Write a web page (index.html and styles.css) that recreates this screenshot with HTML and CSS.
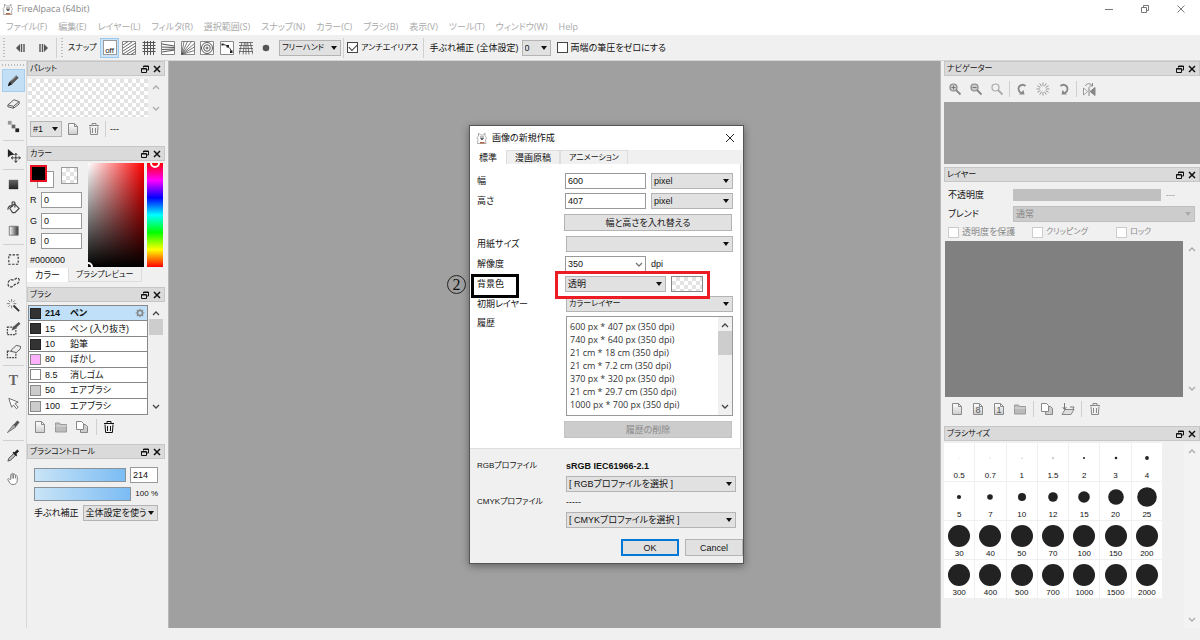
FILE: index.html
```html
<!DOCTYPE html>
<html lang="ja">
<head>
    <meta charset="UTF-8">
    <meta name="viewport" content="width=device-width, initial-scale=1.0">
    <title>FireAlpaca (64bit)</title>
    <link rel="stylesheet" href="styles.css">
</head>
<body>

    <!-- Shared icons -->
    <svg class="sprite" width="0" height="0" aria-hidden="true">
        <defs>
            <linearGradient id="darkFade" x1="0" y1="0" x2="0" y2="1"><stop offset="0" stop-color="#666"/><stop offset="1" stop-color="#222"/></linearGradient>
            <linearGradient id="sideFade"><stop offset="0" stop-color="#fff"/><stop offset="1" stop-color="#333"/></linearGradient>
            <linearGradient id="sheet" x1="0" y1="0" x2="0" y2="1"><stop offset="0" stop-color="#fff"/><stop offset="1" stop-color="#ccc"/></linearGradient>
            <symbol id="alpaca" viewBox="0 0 12 12">
                <path d="M2.500 1v3L1 5.500 2 8l-.5 3.500h8.500L9.500 8l1-2.500L9 4V1L7.500 3h-3z" fill="#fff" stroke="#999" stroke-width=".8"/>
                <path d="M4 5h4M4.500 6.500h3L6 8z" fill="#555" stroke="#555" stroke-width=".8"/>
                <path d="M4 10h4.500v1.500H4z" fill="#b56a4a"/>
            </symbol>
            <symbol id="float" viewBox="0 0 8 8">
                <path d="M2.500 2.500V1h5v4H6M2.500 1.500h5M.5 3.500h5v4h-5zM.5 4h5" fill="none" stroke="#111"/>
            </symbol>
            <symbol id="close" viewBox="0 0 8 8"><path d="M1 1l6 6M7 1L1 7" stroke="#111" stroke-width="1.500"/></symbol>
            <symbol id="up" viewBox="0 0 8 8"><path d="M1 6l3-3 3 3" fill="none" stroke="currentColor" stroke-width="1.300"/></symbol>
            <symbol id="down" viewBox="0 0 8 8"><path d="M1 2l3 3 3-3" fill="none" stroke="currentColor" stroke-width="1.300"/></symbol>
            <symbol id="page" viewBox="0 0 14 14">
                <path d="M2.500 1.500h6l3 3v8h-9z" fill="url(#sheet)" stroke="#8a8a8a"/><path d="M8.500 1.500v3h3" fill="none" stroke="#8a8a8a"/>
            </symbol>
            <symbol id="folder" viewBox="0 0 14 14">
                <path d="M1.500 3h4l1 1.500h6V12h-11z" fill="#bbb" stroke="#999"/><path d="M1.500 6h11" stroke="#ddd"/>
            </symbol>
            <symbol id="copy" viewBox="0 0 14 14">
                <path d="M5.500 4.500h5l2 2v6h-7z" fill="#ccc" stroke="#888"/><path d="M1.500 1.500h5l2 2v6h-7z" fill="#fff" stroke="#888"/>
            </symbol>
            <symbol id="trash" viewBox="0 0 14 14">
                <path d="M3 4.500l.6 8h6.800l.6-8M2 3.500h10M5 3V1.500h4V3M5.500 6v5M8.500 6v5" fill="none" stroke="currentColor"/>
            </symbol>
            <symbol id="merge" viewBox="0 0 14 14">
                <path d="M4 7.500h9l-3 5H1z" fill="#ddd" stroke="#888"/><path d="M9 5h4l-1 2M3.500 1v6M1.500 5l2 2.500 2-2.500" fill="none" stroke="#777"/>
            </symbol>
            <symbol id="loupe" viewBox="0 0 14 14">
                <circle cx="5.500" cy="5.500" r="3.500" fill="none" stroke="currentColor" stroke-width="1.200"/><path d="M8 8l4.500 4.500" stroke="currentColor" stroke-width="1.800"/>
            </symbol>
            <symbol id="turn" viewBox="0 0 14 14">
                <path d="M10.500 4C8 1.500 3.500 3 3.500 7c0 2 1 3 2.500 4" fill="none" stroke="#888" stroke-width="1.800"/><path d="M4 12.500h5.500L8.500 8z" fill="#888"/>
            </symbol>
            <symbol id="gear" viewBox="0 0 12 12">
                <circle cx="6" cy="6" r="3" fill="none" stroke="#888" stroke-width="1.800"/>
                <path d="M6 .8v2M6 9.200v2M.8 6h2M9.200 6h2M2.300 2.300l1.400 1.400M8.300 8.300l1.400 1.400M9.700 2.300L8.300 3.700M3.700 8.300L2.300 9.700" stroke="#888" stroke-width="1.400"/>
            </symbol>
        </defs>
    </svg>

    <header class="titlebar">
        <svg class="app-icon"><use href="#alpaca"/></svg>
        <h1>FireAlpaca (64bit)</h1>
        <div class="window-buttons">
            <button aria-label="最小化"><svg viewBox="0 0 10 10"><path d="M1 5.500h8" stroke="#777"/></svg></button>
            <button aria-label="元に戻す"><svg viewBox="0 0 10 10"><path d="M1.500 3.500h5v5h-5zM3.500 3V1.500h5v5H7" fill="none" stroke="#777"/></svg></button>
            <button aria-label="閉じる"><svg viewBox="0 0 10 10"><path d="M1.500 1.500l7 7M8.500 1.500l-7 7" stroke="#777"/></svg></button>
        </div>
    </header>

    <nav class="menubar">
        <button>ファイル(F)</button>
        <button>編集(E)</button>
        <button>レイヤー(L)</button>
        <button>フィルタ(R)</button>
        <button>選択範囲(S)</button>
        <button>スナップ(N)</button>
        <button>カラー(C)</button>
        <button>ブラシ(B)</button>
        <button>表示(V)</button>
        <button>ツール(T)</button>
        <button>ウィンドウ(W)</button>
        <button>Help</button>
    </nav>

    <div class="toolbar">
        <span class="grip"></span>
        <button class="step" aria-label="前へ"><svg viewBox="0 0 10 10"><path d="M5 1v8L1 5z" fill="#555"/><path d="M6.500 1v8M9 1v8" stroke="#555" stroke-width="1.400"/></svg></button>
        <button class="step" aria-label="次へ"><svg viewBox="0 0 10 10"><path d="M5 1v8l4-4z" fill="#555"/><path d="M1 1v8M3.500 1v8" stroke="#555" stroke-width="1.400"/></svg></button>
        <span class="divider"></span>
        <span class="grip"></span>
        <span class="snap-label kana">スナップ</span>
        <div class="snaps">
            <button class="snap active" aria-label="スナップオフ"><span class="snap-off">off</span></button>
            <button class="snap" aria-label="平行"><svg viewBox="0 0 14 14"><path d="M.5.5h13v13H.5z" fill="#fff" stroke="#888"/><path d="M1 4l5-3.500M1 7l9-6M1 10l12.500-8M1 13l12.500-8M5 13l8.500-5M9 13.500l4.500-3" stroke="#555" stroke-width=".9"/></svg></button>
            <button class="snap" aria-label="十字"><svg viewBox="0 0 14 14"><path d="M.5 1.500h13M.5 4.500h13M.5 7.500h13M.5 10.500h13M2.500 0v14M5.500 0v14M8.500 0v14M11.500 0v14" stroke="#555"/></svg></button>
            <button class="snap" aria-label="消失点"><svg viewBox="0 0 14 14"><path d="M.5.5h13v13H.5z" fill="#fff" stroke="#888"/><path d="M1 3l12.500 2M1 6l12.500.5M1 8.500l12.500-.5M1 11l12.500-2" stroke="#555" fill="none"/></svg></button>
            <button class="snap" aria-label="放射"><svg viewBox="0 0 14 14"><path d="M.5.5h13v13H.5z" fill="#fff" stroke="#888"/><path d="M.5 13.500L3 .5M.5 13.500l6-13M.5 13.500l10-13M.5 13.500l13-11M.5 13.500l13-7.500M.5 13.500l13-4" stroke="#555" stroke-width=".8"/></svg></button>
            <button class="snap" aria-label="同心円"><svg viewBox="0 0 14 14"><path d="M.5.5h13v13H.5z" fill="#fff" stroke="#888"/><g fill="none" stroke="#555"><circle cx="7" cy="7" r="5.500"/><circle cx="7" cy="7" r="3.300"/><circle cx="7" cy="7" r="1"/></g></svg></button>
            <button class="snap" aria-label="曲線"><svg viewBox="0 0 14 14"><path d="M.5.5h13v13H.5z" fill="#fff" stroke="#888"/><path d="M2 3.500c5 0 8 3 9.500 7" fill="none" stroke="#333"/><path d="M1.500 2.500h2v2h-2zM6.500 4h2.500v2.500H6.500zM10 9.500h2.500V12H10z" fill="#222"/></svg></button>
            <button class="snap" aria-label="パース"><svg viewBox="0 0 14 14"><path d="M0 1.500h14M0 4.500h14M0 7.500h14M0 10.500h14M3 1L0 13.500M5.500 1L4 13.500M8.500 1l1.500 12.500M11 1l3 12.500M7 1v12.500" stroke="#555" stroke-width=".8"/></svg></button>
            <button class="snap" aria-label="スナップ設定"><svg viewBox="0 0 14 14"><circle cx="7" cy="7" r="3.300" fill="#555"/></svg></button>
        </div>
        <span class="select freehand kana"><select aria-label="描画方法"><option>フリーハンド</option></select></span>
        <span class="divider"></span>
        <label class="check kana"><input type="checkbox" checked>アンチエイリアス</label>
        <span class="divider wide"></span>
        <label for="stabilizer">手ぶれ補正 (全体設定)</label>
        <span class="select level"><select id="stabilizer"><option>0</option></select></span>
        <label class="check"><input type="checkbox">両端の筆圧をゼロにする</label>
    </div>

    <div class="workspace">

        <div class="tools">
            <span class="tool-grip"></span>
            <button class="tool active" aria-label="ブラシ"><svg viewBox="0 0 16 16"><path d="M2 14l1.500-4.500L11 2.500l2.500 2.500-7.500 7.500z" fill="#555"/><path d="M2 14l1.500-4.500L6 12z" fill="#111"/><path d="M6 8l5.500-5" stroke="#aaa"/></svg></button>
            <button class="tool" aria-label="消しゴム"><svg viewBox="0 0 16 16"><path d="M2 9.500L8.500 4 14 6v2.500L8 13l-6-1.500z" fill="#eee" stroke="#555"/><path d="M2 9.500l6 1.500v2M8 11l6-5" fill="none" stroke="#555"/></svg></button>
            <button class="tool" aria-label="ドット"><svg viewBox="0 0 16 16"><path d="M2 2h4v4H2z" fill="#999"/><path d="M6 6h4v4H6z" fill="#666"/><path d="M10 10h4v4h-4z" fill="#222"/></svg></button>
            <hr>
            <button class="tool" aria-label="移動"><svg viewBox="0 0 16 16"><path d="M2 1v9l2.500-2L9 7z" fill="#222"/><path d="M10.500 6v9M6 10.500h9M9 7.500l1.500-2L12 7.500M9 13.500l1.500 2 1.500-2M7.500 9l-2 1.500 2 1.500M13.500 9l2 1.500-2 1.500" fill="none" stroke="#333"/></svg></button>
            <hr>
            <button class="tool" aria-label="塗りつぶし"><svg viewBox="0 0 16 16"><path d="M3 3h10v10H3z" fill="url(#darkFade)"/></svg></button>
            <button class="tool" aria-label="バケツ"><svg viewBox="0 0 16 16"><path d="M4 9l5-5 5 5-4.500 4.500H7z" fill="#eee" stroke="#444" stroke-width="1.200"/><path d="M2 10.500c0-3 1.500-4.500 4.500-4.500M6.500 7.500V3c0-1.500 3-1.500 3 0v5" fill="none" stroke="#444" stroke-width="1.200"/></svg></button>
            <button class="tool" aria-label="グラデーション"><svg viewBox="0 0 16 16"><path d="M3.500 3.500h9.500v9.500H3.500z" fill="url(#sideFade)" stroke="#777"/></svg></button>
            <hr>
            <button class="tool" aria-label="選択"><svg viewBox="0 0 16 16"><path d="M3 3h10v10H3z" fill="none" stroke="#333" stroke-width="1.200" stroke-dasharray="2.500 1.500"/></svg></button>
            <button class="tool" aria-label="投げなわ"><svg viewBox="0 0 16 16"><path d="M5 5c2 0 3 1 4 0s3-2.500 4.500-1 0 4-1 5-3 .5-4 2-4 2.500-5.500 1S2 6 5 5z" fill="none" stroke="#444" stroke-width="1.300" stroke-dasharray="3 1.200"/></svg></button>
            <button class="tool" aria-label="自動選択"><svg viewBox="0 0 16 16"><path d="M8 8l6 6" stroke="#333" stroke-width="2"/><path d="M6 1v3M6 8v3M1 6h3M8 6h3M2.500 2.500l2 2M9.500 2.500l-2 2M2.500 9.500l2-2" stroke="#777"/></svg></button>
            <button class="tool" aria-label="選択ペン"><svg viewBox="0 0 16 16"><path d="M1.500 6.500h9v8h-9z" fill="none" stroke="#444" stroke-width="1.300" stroke-dasharray="2 1"/><path d="M6 10l1-3 6.500-6L15.500 3 9 9z" fill="#555"/></svg></button>
            <button class="tool" aria-label="選択消し"><svg viewBox="0 0 16 16"><path d="M1.500 7.500h9v7h-9z" fill="none" stroke="#444" stroke-width="1.300" stroke-dasharray="2 1"/><path d="M6 6l5-4.500 4.500 1V5L11 9 6 8z" fill="#eee" stroke="#555"/></svg></button>
            <hr>
            <button class="tool letter" aria-label="テキスト">T</button>
            <button class="tool" aria-label="操作"><svg viewBox="0 0 16 16"><path d="M3 2.500l10 4-3.500 1.500 3.500 4-2 1.500-3-4L6 12z" fill="#fff" stroke="#666"/></svg></button>
            <button class="tool" aria-label="分割"><svg viewBox="0 0 16 16"><path d="M1.500 14.500L8 6l2.500 2.500z" fill="#aaa" stroke="#777"/><path d="M8 6l4-4.500 2.500 2L10.500 8.500z" fill="#555"/></svg></button>
            <hr>
            <button class="tool" aria-label="スポイト"><svg viewBox="0 0 16 16"><path d="M2 14l1-3 5-5 2 2-5 5z" fill="#bbb" stroke="#555"/><path d="M7 5l4 4 1-1.500-1-1 3-3-2-2-3 3-1-.5z" fill="#222"/></svg></button>
            <button class="tool" aria-label="手のひら"><svg viewBox="0 0 16 16"><path d="M5 9V4.500c0-1.500 1.500-1.500 1.500 0v-1c0-1.500 1.500-1.500 1.500 0v1c0-1.500 2-1.500 2 0v1c0-1.500 2-1 2 .5V10c0 3-2 4.500-4.500 4.500S4 13 2 9.500C1.500 8 3 7.500 4 9zM6.500 4.500V8M8 4.500V8M10 5v3" fill="#fff" stroke="#777"/></svg></button>
        </div>

        <aside class="dock left-dock">
            <section class="panel palette">
                <div class="panel-head"><h2>パレット</h2><button aria-label="切り離す"><svg><use href="#float"/></svg></button><button aria-label="閉じる"><svg><use href="#close"/></svg></button></div>
                <div class="palette-body">
                    <div class="swatches checker"></div>
                    <div class="scroll faint"><svg><use href="#up"/></svg><svg><use href="#down"/></svg></div>
                </div>
                <div class="palette-actions">
                    <span class="select"><select aria-label="パレット番号"><option>#1</option></select></span>
                    <button aria-label="追加"><svg><use href="#page"/></svg></button>
                    <button aria-label="削除" class="muted"><svg><use href="#trash"/></svg></button>
                    <span class="divider"></span>
                    <span>---</span>
                </div>
            </section>

            <section class="panel color">
                <div class="panel-head"><h2>カラー</h2><button aria-label="切り離す"><svg><use href="#float"/></svg></button><button aria-label="閉じる"><svg><use href="#close"/></svg></button></div>
                <div class="color-body">
                    <div class="color-values">
                        <div class="color-chips">
                            <span class="chip-back"></span>
                            <span class="chip-front"></span>
                            <span class="chip-clear checker"></span>
                        </div>
                        <label>R<input type="text" value="0"></label>
                        <label>G<input type="text" value="0"></label>
                        <label>B<input type="text" value="0"></label>
                        <span>#000000</span>
                    </div>
                    <div class="sv-box"><span class="ring"></span></div>
                    <div class="hue-bar"><span class="ring"></span></div>
                </div>
                <div class="tabs">
                    <button class="tab active">カラー</button>
                    <button class="tab kana">ブラシプレビュー</button>
                </div>
            </section>

            <section class="panel brush">
                <div class="panel-head"><h2>ブラシ</h2><button aria-label="切り離す"><svg><use href="#float"/></svg></button><button aria-label="閉じる"><svg><use href="#close"/></svg></button></div>
                <div class="brush-body">
                    <ul class="brush-list">
                        <li class="selected"><i class="tip dark"></i><span>214</span>ペン<svg><use href="#gear"/></svg></li>
                        <li><i class="tip dark"></i><span>15</span>ペン (入り抜き)</li>
                        <li><i class="tip dark"></i><span>10</span>鉛筆</li>
                        <li><i class="tip pink"></i><span>80</span>ぼかし</li>
                        <li><i class="tip"></i><span>8.5</span>消しゴム</li>
                        <li><i class="tip gray"></i><span>50</span>エアブラシ</li>
                        <li><i class="tip gray"></i><span>100</span>エアブラシ</li>
                    </ul>
                    <div class="scroll"><svg><use href="#up"/></svg><span class="thumb"></span><svg><use href="#down"/></svg></div>
                </div>
                <div class="actions">
                    <button aria-label="追加"><svg><use href="#page"/></svg></button>
                    <button aria-label="フォルダ"><svg><use href="#folder"/></svg></button>
                    <button aria-label="複製"><svg><use href="#copy"/></svg></button>
                    <span class="divider"></span>
                    <button aria-label="削除"><svg><use href="#trash"/></svg></button>
                </div>
            </section>

            <section class="panel control">
                <div class="panel-head"><h2>ブラシコントロール</h2><button aria-label="切り離す"><svg><use href="#float"/></svg></button><button aria-label="閉じる"><svg><use href="#close"/></svg></button></div>
                <div class="control-body">
                    <div class="control-row"><input type="range" aria-label="ブラシ幅" value="100"><input type="text" aria-label="幅の値" value="214"></div>
                    <div class="control-row"><input type="range" aria-label="不透明度" value="100"><span class="kana">100 %</span></div>
                    <div class="control-row"><label for="brushStab">手ぶれ補正</label><span class="select"><select id="brushStab"><option>全体設定を使う</option></select></span></div>
                </div>
            </section>
        </aside>

        <main class="canvas">
            <div class="dialog" role="dialog" aria-labelledby="dialogTitle">
                <div class="dialog-title">
                    <svg class="app-icon"><use href="#alpaca"/></svg>
                    <h2 id="dialogTitle">画像の新規作成</h2>
                    <button aria-label="閉じる"><svg viewBox="0 0 10 10"><path d="M1 1l8 8M9 1L1 9" stroke="#222"/></svg></button>
                </div>
                <div class="tabs">
                    <button class="tab active">標準</button>
                    <button class="tab">漫画原稿</button>
                    <button class="tab kana">アニメーション</button>
                </div>
                <form class="sheet">
                    <div class="row"><label for="w">幅</label><div class="fields"><input id="w" type="text" value="600"><span class="select"><select aria-label="幅の単位"><option>pixel</option></select></span></div></div>
                    <div class="row"><label for="h">高さ</label><div class="fields"><input id="h" type="text" value="407"><span class="select"><select aria-label="高さの単位"><option>pixel</option></select></span></div></div>
                    <div class="row"><span></span><button type="button" class="btn">幅と高さを入れ替える</button></div>
                    <div class="row"><label for="paper">用紙サイズ</label><span class="select"><select id="paper"><option></option></select></span></div>
                    <div class="row"><label for="dpi">解像度</label><div class="fields"><span class="combo"><input id="dpi" type="text" value="350"><svg><use href="#down"/></svg></span>dpi</div></div>
                    <div class="row"><label for="bg">背景色</label><div class="fields"><span class="select bg"><select id="bg"><option>透明</option></select></span><span class="bg-swatch checker"></span></div></div>
                    <div class="row"><label for="first">初期レイヤー</label><span class="select kana"><select id="first"><option>カラーレイヤー</option></select></span></div>
                    <div class="row history"><span>履歴</span>
                        <div class="listbox">
                            <ul>
                                <li>600 px * 407 px (350 dpi)</li>
                                <li>740 px * 640 px (350 dpi)</li>
                                <li>21 cm * 18 cm (350 dpi)</li>
                                <li>21 cm * 7.2 cm (350 dpi)</li>
                                <li>370 px * 320 px (350 dpi)</li>
                                <li>21 cm * 29.7 cm (350 dpi)</li>
                                <li>1000 px * 700 px (350 dpi)</li>
                            </ul>
                            <div class="scroll"><svg><use href="#up"/></svg><span class="thumb"></span><svg><use href="#down"/></svg></div>
                        </div>
                    </div>
                    <div class="row"><span></span><button type="button" class="btn" disabled>履歴の削除</button></div>
                </form>
                <div class="profiles">
                    <label class="kana" for="rgb">RGBプロファイル</label><strong>sRGB IEC61966-2.1</strong>
                    <span class="select"><select id="rgb"><option>[ RGBプロファイルを選択 ]</option></select></span>
                    <label class="kana" for="cmyk">CMYKプロファイル</label><span>-----</span>
                    <span class="select"><select id="cmyk"><option>[ CMYKプロファイルを選択 ]</option></select></span>
                </div>
                <div class="dialog-buttons">
                    <button class="btn primary">OK</button>
                    <button class="btn">Cancel</button>
                </div>

                <!-- Tutorial marks over the background color row -->
                <span class="mark mark-number">2</span>
                <span class="mark mark-label"></span>
                <span class="mark mark-field"></span>
            </div>
        </main>

        <aside class="dock right-dock">
            <section class="panel navigator">
                <div class="panel-head"><h2>ナビゲーター</h2><button aria-label="切り離す"><svg><use href="#float"/></svg></button><button aria-label="閉じる"><svg><use href="#close"/></svg></button></div>
                <div class="actions nav-actions">
                    <button aria-label="拡大"><svg viewBox="0 0 14 14"><circle cx="5.500" cy="5.500" r="3.500" fill="#ccc"/><use href="#loupe"/><path d="M5.500 3.500v4M3.500 5.500h4" stroke="#777"/></svg></button>
                    <button aria-label="縮小"><svg viewBox="0 0 14 14"><circle cx="5.500" cy="5.500" r="3.500" fill="#ccc"/><use href="#loupe"/><path d="M3.500 5.500h4" stroke="#777"/></svg></button>
                    <button aria-label="全体表示" class="light"><svg><use href="#loupe"/></svg></button>
                    <span class="divider"></span>
                    <button aria-label="左回転"><svg><use href="#turn"/></svg></button>
                    <button aria-label="回転リセット"><svg viewBox="0 0 14 14"><path d="M10 7h3.500M.5 7H4M7 .5V4M7 10v3.500M9.600 5.500l3-1.800M9.600 8.500l3 1.800M4.400 5.500l-3-1.800M4.400 8.500l-3 1.800M8.500 4.400l1.800-3M5.500 4.400L3.700 1.400M8.500 9.600l1.800 3M5.500 9.600l-1.800 3" stroke="#999"/></svg></button>
                    <button aria-label="右回転"><svg class="flip"><use href="#turn"/></svg></button>
                    <span class="divider"></span>
                    <button aria-label="左右反転"><svg viewBox="0 0 14 14"><path d="M1.500 6l4 3.500-4 3.500z" fill="#fff" stroke="#999"/><path d="M13 5.500v8L8 9.500zM7 5v9" fill="#888" stroke="#888"/><path d="M3.500 4c1-3 5-3 6.500-.5M10.500 1v3H7.500" fill="none" stroke="#888"/></svg></button>
                </div>
                <div class="nav-view"></div>
            </section>

            <section class="panel layers">
                <div class="panel-head"><h2>レイヤー</h2><button aria-label="切り離す"><svg><use href="#float"/></svg></button><button aria-label="閉じる"><svg><use href="#close"/></svg></button></div>
                <div class="layer-row"><label for="opacity">不透明度</label><input id="opacity" type="range" disabled><span class="off">---</span></div>
                <div class="layer-row"><label for="blend">ブレンド</label><span class="select"><select id="blend" disabled><option>通常</option></select></span></div>
                <div class="layer-checks">
                    <label class="check"><input type="checkbox" disabled>透明度を保護</label>
                    <label class="check kana"><input type="checkbox" disabled>クリッピング</label>
                    <label class="check kana"><input type="checkbox" disabled>ロック</label>
                </div>
                <div class="layer-body">
                    <div class="layer-list"></div>
                    <div class="scroll faint"><svg><use href="#up"/></svg><svg><use href="#down"/></svg></div>
                </div>
                <div class="actions">
                    <button aria-label="新規レイヤー"><svg><use href="#page"/></svg></button>
                    <button aria-label="8bitレイヤー"><svg class="stamped"><use href="#page"/><text x="7" y="11">8</text></svg></button>
                    <button aria-label="1bitレイヤー"><svg class="stamped"><use href="#page"/><text x="7" y="11">1</text></svg></button>
                    <button aria-label="フォルダ"><svg><use href="#folder"/></svg></button>
                    <span class="divider"></span>
                    <button aria-label="複製"><svg><use href="#copy"/></svg></button>
                    <button aria-label="統合"><svg><use href="#merge"/></svg></button>
                    <span class="divider"></span>
                    <button aria-label="削除" class="muted"><svg><use href="#trash"/></svg></button>
                </div>
            </section>

            <section class="panel sizes">
                <div class="panel-head"><h2>ブラシサイズ</h2><button aria-label="切り離す"><svg><use href="#float"/></svg></button><button aria-label="閉じる"><svg><use href="#close"/></svg></button></div>
                <div class="size-body">
                    <div class="size-grid">
                        <button><svg><circle cx="15" cy="15" r=".2"/></svg>0.5</button>
                        <button><svg><circle cx="15" cy="15" r=".3"/></svg>0.7</button>
                        <button><svg><circle cx="15" cy="15" r=".4"/></svg>1</button>
                        <button><svg><circle cx="15" cy="15" r=".6"/></svg>1.5</button>
                        <button><svg><circle cx="15" cy="15" r="1"/></svg>2</button>
                        <button><svg><circle cx="15" cy="15" r="1.300"/></svg>3</button>
                        <button><svg><circle cx="15" cy="15" r="1.900"/></svg>4</button>
                        <button><svg><circle cx="15" cy="15" r="2.100"/></svg>5</button>
                        <button><svg><circle cx="15" cy="15" r="2.800"/></svg>7</button>
                        <button><svg><circle cx="15" cy="15" r="4"/></svg>10</button>
                        <button><svg><circle cx="15" cy="15" r="4.800"/></svg>12</button>
                        <button><svg><circle cx="15" cy="15" r="5.800"/></svg>15</button>
                        <button><svg><circle cx="15" cy="15" r="7.800"/></svg>20</button>
                        <button><svg><circle cx="15" cy="15" r="9.800"/></svg>25</button>
                        <button><svg><circle cx="15" cy="15" r="11"/></svg>30</button>
                        <button><svg><circle cx="15" cy="15" r="11"/></svg>40</button>
                        <button><svg><circle cx="15" cy="15" r="11"/></svg>50</button>
                        <button><svg><circle cx="15" cy="15" r="11"/></svg>70</button>
                        <button><svg><circle cx="15" cy="15" r="11"/></svg>100</button>
                        <button><svg><circle cx="15" cy="15" r="11"/></svg>150</button>
                        <button><svg><circle cx="15" cy="15" r="11"/></svg>200</button>
                        <button><svg><circle cx="15" cy="15" r="11"/></svg>300</button>
                        <button><svg><circle cx="15" cy="15" r="11"/></svg>400</button>
                        <button><svg><circle cx="15" cy="15" r="11"/></svg>500</button>
                        <button><svg><circle cx="15" cy="15" r="11"/></svg>700</button>
                        <button><svg><circle cx="15" cy="15" r="11"/></svg>1000</button>
                        <button><svg><circle cx="15" cy="15" r="11"/></svg>1500</button>
                        <button><svg><circle cx="15" cy="15" r="11"/></svg>2000</button>
                    </div>
                    <div class="scroll faint"><svg><use href="#up"/></svg><svg><use href="#down"/></svg></div>
                </div>
            </section>
        </aside>
    </div>

    <footer class="statusbar"></footer>

</body>
</html>
```

FILE: styles.css
```css
* {
    margin: 0;
    padding: 0;
    box-sizing: border-box;
}
body {
    min-height: 100vh;
    display: flex;
    flex-direction: column;
    background: #f0f0f0;
    color: #111;
    font: 9px/14px "Liberation Sans", "Noto Sans CJK JP", sans-serif;
    font-feature-settings: "palt";
}
button, input, select {
    font: inherit;
    font-feature-settings: inherit;
    color: inherit;
    border: none;
    border-radius: 0;
    background: none;
}
h1, h2 {
    font-size: inherit;
    font-weight: normal;
}
ul {
    list-style: none;
}
label, span, button, h2, li {
    white-space: nowrap;
}
svg {
    display: block;
}
.sprite {
    position: absolute;
}
.app-icon {
    width: 12px;
    height: 12px;
}
.kana, .panel-head h2 {
    font-size: 8px;
}

/* Title and menus */
.titlebar {
    display: flex;
    align-items: center;
    height: 18px;
    padding-left: 2px;
    background: #fff;
}
.titlebar h1 {
    flex: 1;
    margin-left: 3px;
    color: #888;
    font: 9px/14px "Open Sans", sans-serif;
}
.window-buttons button {
    width: 36px;
    padding: 0 13px;
}
.window-buttons {
    display: flex;
    margin-right: 1px;
}
.window-buttons svg {
    width: 10px;
    height: 10px;
}
.menubar {
    display: flex;
    gap: 11px;
    height: 17px;
    padding-left: 6px;
    background: #fff;
    color: #aaa;
    font: 9px/17px "Open Sans", "Noto Sans CJK JP", sans-serif;
    font-feature-settings: "palt";
}

/* Form parts */
input[type="text"] {
    height: 16px;
    min-width: 0;
    padding: 0 2px;
    border: 1px solid #999;
    background: #fff;
}
.select {
    position: relative;
    display: block;
    height: 16px;
    min-width: 0;
}
.select select {
    appearance: none;
    display: block;
    width: 100%;
    height: 100%;
    padding: 0 10px 0 2px;
    border: 1px solid #b4b4b4;
    background: #e1e1e1;
    line-height: 14px;
}
.select::after {
    content: "";
    position: absolute;
    right: 4px;
    top: 6px;
    border: 3px solid transparent;
    border-top: 4px solid #111;
    border-bottom: none;
    pointer-events: none;
}
.select select:disabled {
    background: #ccc;
    border-color: #bfbfbf;
    color: #888;
    opacity: 1;
}
.check {
    display: flex;
    align-items: center;
    gap: 3px;
}
.check input {
    appearance: none;
    width: 11px;
    height: 11px;
    border: 1px solid #444;
    background: #fff;
}
.check input:checked::after {
    content: "";
    display: block;
    width: 7px;
    height: 4px;
    margin: 1px;
    border: solid #333;
    border-width: 0 0 1px 1px;
    transform: rotate(-45deg);
}
.check input:disabled {
    border-color: #ccc;
}
.btn {
    height: 17px;
    border: 1px solid #b4b4b4;
    background: #e1e1e1;
}
.btn:disabled {
    border-color: #c4c4c4;
    background: #ccc;
    color: #888;
}
.btn.primary {
    border: 2px solid #0078d7;
}
.divider {
    width: 1px;
    height: 16px;
    background: #d0d0d0;
}
.checker {
    background: repeating-conic-gradient(#e2e2e2 0 25%, #fff 0 50%) 0 0 / 8px 8px;
}
.scroll {
    display: flex;
    flex-direction: column;
    align-items: center;
    justify-content: space-between;
    width: 14px;
    padding: 4px 0;
    color: #444;
}
.scroll svg {
    width: 8px;
    height: 8px;
}
.scroll.faint {
    color: #aaa;
}
.thumb {
    width: 100%;
    background: #cdcdcd;
}
.scroll .thumb {
    margin-bottom: auto;
}

/* Toolbar */
.toolbar {
    display: flex;
    align-items: center;
    height: 26px;
    padding-left: 3px;
    border-bottom: 1px solid #d5d5d5;
}
.grip {
    width: 2px;
    height: 20px;
    background: repeating-linear-gradient(#bbb 0 1px, transparent 1px 3px);
}
.step {
    width: 24px;
    padding: 0 7px;
}
.step:first-of-type {
    margin-left: 3px;
}
.step svg {
    width: 10px;
    height: 10px;
}
.toolbar .divider {
    height: 20px;
}
.toolbar .divider + .grip {
    margin: 0 5px 0 4px;
}
.snap-label {
    width: 32px;
}
.snaps {
    display: flex;
    margin-right: 4px;
}
.snap {
    display: flex;
    align-items: center;
    justify-content: center;
    width: 19px;
    height: 20px;
}
.snap:nth-child(even) {
    width: 20px;
}
.snap.active {
    border: 1px solid #99c9ef;
    background: #cce4f7;
}
.snap svg {
    width: 14px;
    height: 14px;
}
.snap-off {
    width: 14px;
    height: 15px;
    padding-top: 5px;
    border: 1px solid #999;
    background: #fff;
    font-size: 8px;
    line-height: 9px;
}
.freehand {
    width: 62px;
    margin-right: 2px;
}
.toolbar .check {
    margin-left: 3px;
}
.toolbar .divider.wide {
    margin: 0 5px;
}
.level {
    width: 29px;
    margin: 0 3px;
}

/* Workspace */
.workspace {
    flex: 1;
    display: flex;
}
.tools {
    display: flex;
    flex-direction: column;
    width: 27px;
    padding: 3px 1px 0 2px;
    border-right: 1px solid #d8d8d8;
}
.tool-grip {
    height: 2px;
    margin-bottom: 3px;
    background: repeating-linear-gradient(90deg, #bbb 0 1px, transparent 1px 3px);
}
.tools hr {
    height: 1px;
    margin: 2px 1px 3px;
    border: none;
    background: #d0d0d0;
}
.tool {
    display: flex;
    align-items: center;
    justify-content: center;
    height: 23px;
}
.tool.active {
    border: 1px solid #a6cdec;
    background: #c3dff5;
}
.tool svg {
    width: 15px;
    height: 15px;
}
.tool.letter {
    color: #666;
    font: bold 14px/20px "Liberation Serif", serif;
}
.dock {
    display: flex;
    flex-direction: column;
}
.left-dock {
    width: 142px;
    padding-right: 3px;
    border-right: 1px solid #b8b8b8;
}
.panel-head {
    display: flex;
    align-items: center;
    gap: 4px;
    height: 15px;
    padding: 0 3px 0 2px;
    border: 1px solid #c6c6c6;
    background: #dadada;
}
.panel-head h2 {
    flex: 1;
}
.panel-head svg {
    width: 8px;
    height: 8px;
}
.actions {
    display: flex;
    align-items: center;
    gap: 7px;
}
.actions svg, .palette-actions svg {
    width: 14px;
    height: 14px;
}
.muted {
    color: #888;
}

/* Palette */
.palette {
    height: 85px;
}
.palette-body {
    display: flex;
    height: 41px;
    padding: 3px 2px 0 1px;
}
.swatches {
    flex: 1;
    margin-right: 1px;
}
.palette-actions {
    display: flex;
    align-items: center;
    gap: 4px;
    padding: 4px 3px 0;
}
.palette-actions .select {
    width: 32px;
}
.palette-actions button:nth-of-type(1) {
    margin-right: 3px;
}

/* Color */
.color {
    height: 141px;
}
.color-body {
    display: flex;
    gap: 3px;
    height: 107px;
    padding: 2px 2px 1px 3px;
}
.color-values {
    display: flex;
    flex-direction: column;
    justify-content: space-between;
    width: 55px;
}
.color-chips {
    position: relative;
    height: 25px;
}
.chip-front, .chip-back, .chip-clear {
    position: absolute;
    width: 17px;
    height: 17px;
    border: 1px solid #999;
}
.chip-front {
    top: 2px;
    left: 0;
    border: 2px solid #e81123;
    background: #000;
}
.chip-back {
    top: 8px;
    left: 7px;
    background: #fff;
}
.chip-clear {
    top: 4px;
    left: 31px;
}
.color-values label {
    display: flex;
    align-items: center;
    justify-content: space-between;
}
.color-values input {
    width: 41px;
    margin-right: 3px;
}
.sv-box {
    position: relative;
    flex: 1;
    overflow: hidden;
    background: linear-gradient(transparent, #000), linear-gradient(90deg, #fff, #f00);
}
.hue-bar {
    position: relative;
    width: 16px;
    overflow: hidden;
    background: linear-gradient(#f00, #f0f, #00f, #0ff, #0f0, #ff0, #f00);
}
.ring {
    position: absolute;
    width: 10px;
    height: 10px;
    border: 2px solid #fff;
    border-radius: 50%;
}
.sv-box .ring {
    left: -5px;
    bottom: -5px;
}
.hue-bar .ring {
    left: 3px;
    top: -5px;
}
.tabs {
    display: flex;
}
.tab {
    height: 14px;
    border: 1px solid #ddd;
    border-top: none;
}
.color .tab {
    padding: 0 7px;
    line-height: 12px;
}
.color .tab.active {
    width: 41px;
    border-color: #fff;
    background: #fff;
}

/* Brush */
.brush {
    height: 157px;
}
.brush-body {
    display: flex;
    gap: 1px;
    padding: 3px 2px 0 1px;
}
.brush-list {
    flex: 1;
    display: grid;
    grid-template-rows: repeat(7, 1fr);
    height: 110px;
    border: 1px solid #888;
    background: #fff;
}
.brush-list li {
    display: flex;
    align-items: center;
    padding: 0 2px 0 1px;
    border-bottom: 1px solid #888;
}
.brush-list li:last-child {
    border-bottom: none;
}
.brush-list .selected {
    background: #bfe0f8;
    font-weight: bold;
}
.brush-list span {
    width: 25px;
}
.brush-list svg {
    width: 10px;
    height: 10px;
    margin-left: auto;
}
.tip {
    width: 11px;
    height: 11px;
    margin-right: 4px;
    border: 1px solid #888;
}
.tip.dark {
    border-color: #222;
    background: #333;
}
.tip.pink {
    background: #fdb0fb;
}
.tip.gray {
    background: #ccc;
}
.brush .thumb {
    height: 16px;
    margin-top: 2px;
}
.brush .actions {
    padding: 4px 6px;
}
.brush .divider {
    margin-right: -2px;
}

/* Brush control */
input[type="range"] {
    appearance: none;
    flex: 1;
    min-width: 0;
    height: 14px;
    border: 1px solid #8a9299;
    background: linear-gradient(90deg, #c9e4f6, #7bbcf4);
}
input[type="range"]::-webkit-slider-thumb {
    appearance: none;
    width: 1px;
    height: 1px;
}
.control-body {
    display: flex;
    flex-direction: column;
    gap: 3px;
    padding: 8px 7px 0;
}
.control-row {
    display: flex;
    align-items: center;
    gap: 4px;
    height: 16px;
}
.control-row input[type="text"] {
    width: 28px;
}
.control-row .select {
    flex: 1;
}

/* Canvas and dialog */
.canvas {
    position: relative;
    flex: 1;
    background: #a0a0a0;
}
.dialog {
    position: absolute;
    left: 300px;
    top: 64px;
    width: 275px;
    padding-bottom: 7px;
    border: 1px solid #555;
    background: #f0f0f0;
    box-shadow: 0 2px 8px rgba(0, 0, 0, 0.4);
}
.dialog-title {
    display: flex;
    align-items: center;
    gap: 4px;
    height: 24px;
    padding: 0 8px 0 6px;
    background: #fff;
}
.dialog-title h2 {
    flex: 1;
}
.dialog-title svg {
    width: 10px;
    height: 10px;
}
.dialog-title .app-icon {
    width: 12px;
    height: 12px;
}
.dialog .tab {
    padding: 0 8px;
    border: 1px solid #ddd;
    border-bottom: none;
    line-height: 14px;
}
.dialog .tab.active {
    border-color: #fff;
    background: #fff;
}
.sheet {
    display: flex;
    flex-direction: column;
    gap: 4px;
    margin-right: 2px;
    padding: 9px 7px 9px 7px;
    border: solid #ddd;
    border-width: 0 1px 1px 0;
    background: #fff;
}
.row {
    display: grid;
    grid-template-columns: 89px 1fr;
    align-items: center;
}
.row > .btn {
    margin: 1px 1px 1px -2px;
}
.row .fields {
    display: flex;
    align-items: center;
    gap: 5px;
    height: 16px;
    margin-left: -1px;
}
.fields > input, .combo {
    width: 81px;
}
.fields .select {
    flex: 1;
}
.combo {
    position: relative;
}
.combo input {
    width: 100%;
}
.combo svg {
    position: absolute;
    right: 3px;
    top: 5px;
    width: 8px;
    height: 8px;
    color: #777;
}
.fields .select.bg {
    flex: none;
    width: 101px;
}
.bg-swatch {
    width: 32px;
    height: 16px;
    border: 1px solid #888;
}
.history {
    align-items: start;
}
.listbox {
    display: flex;
    height: 100px;
    border: 1px solid #999;
    background: #fff;
    color: #333;
    font: 9px/13px "Open Sans", sans-serif;
}
.listbox ul {
    flex: 1;
    padding: 3px;
}
.listbox .scroll {
    background: #f0f0f0;
}
.listbox .thumb {
    height: 24px;
    margin-top: 2px;
}
.profiles {
    display: grid;
    grid-template-columns: 89px 1fr;
    align-items: center;
    row-gap: 3px;
    padding: 10px 7px 0;
}
.profiles .select {
    grid-column: 2;
}
.dialog-buttons {
    display: flex;
    justify-content: flex-end;
    gap: 6px;
    margin-top: 11px;
}
.dialog-buttons .btn {
    width: 58px;
}
.mark {
    position: absolute;
}
.mark-number {
    left: -23px;
    top: 149px;
    width: 19px;
    height: 19px;
    border: 1px solid #222;
    border-radius: 50%;
    font: 16px/17px "Liberation Serif", serif;
    text-align: center;
}
.mark-label {
    left: 1px;
    top: 148px;
    width: 48px;
    height: 24px;
    border: 3px solid #000;
}
.mark-field {
    left: 85px;
    top: 145px;
    width: 155px;
    height: 28px;
    border: 3px solid #ed1c24;
}

/* Right dock */
.right-dock {
    width: 260px;
    padding-left: 3px;
    border-left: 1px solid #b8b8b8;
}
.navigator {
    height: 106px;
}
.nav-actions {
    height: 26px;
    padding-left: 4px;
    color: #888;
}
.nav-actions .divider {
    margin: 0 -2px;
}
.nav-actions .light {
    color: #aaa;
}
.flip {
    transform: scaleX(-1);
}
.nav-view {
    height: 62px;
    background: #a0a0a0;
}
.layers {
    height: 259px;
}
.layer-row {
    display: flex;
    align-items: center;
    height: 19px;
    padding: 0 5px 0 4px;
}
.layer-row:nth-child(2) {
    margin-top: 3px;
}
.layer-row label {
    width: 65px;
}
.layer-row .select {
    flex: 1;
}
.layer-row .select::after {
    border-top-color: #aaa;
}
.layer-row input[type="range"] {
    height: 12px;
    border: none;
    background: #c0c0c0;
}
.off {
    width: 34px;
    padding-left: 5px;
    color: #999;
}
.layer-checks {
    display: grid;
    grid-template-columns: 84px 84px 1fr;
    height: 18px;
    padding-left: 4px;
    color: #888;
}
.layer-body {
    display: flex;
    height: 156px;
    padding-left: 1px;
}
.layer-list {
    flex: 1;
    background: #808080;
}
.layer-body .scroll {
    width: 17px;
}
.layers .actions {
    height: 24px;
    padding-left: 6px;
}
.layers .divider {
    margin: 0 -1px;
}
.stamped text {
    fill: #555;
    font-size: 9px;
    text-anchor: middle;
}
.sizes {
    flex: 1;
    display: flex;
    flex-direction: column;
}
.size-body {
    flex: 1;
    display: flex;
    justify-content: space-between;
    padding-top: 2px;
}
.size-grid {
    display: grid;
    grid-template-columns: repeat(7, 1fr);
    grid-auto-rows: 38px;
    gap: 1px;
    width: 218px;
    align-content: start;
}
.size-grid button {
    display: flex;
    flex-direction: column;
    align-items: center;
    background: #fff;
    font-size: 8px;
    line-height: 8px;
}
.size-grid svg {
    width: 30px;
    height: 29px;
    fill: #222;
}
.size-body .scroll {
    width: 16px;
    background: #f3f3f3;
}
.statusbar {
    height: 12px;
}
```
